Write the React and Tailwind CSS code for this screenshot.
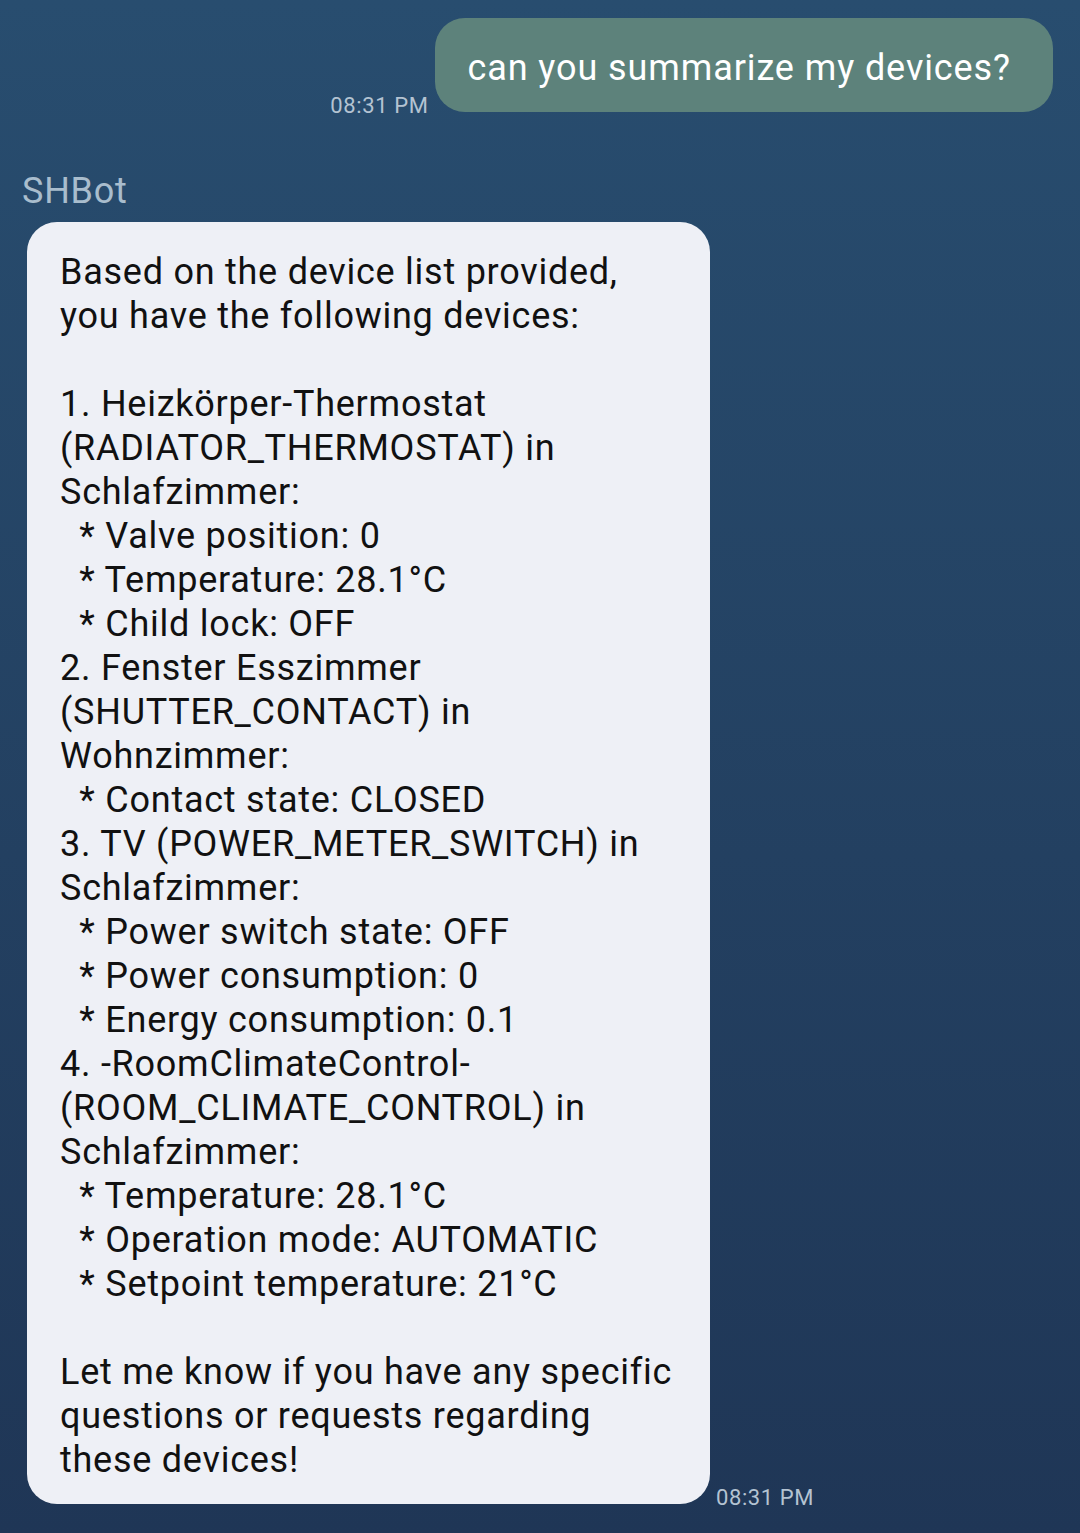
import React from "react";

const botText = `Based on the device list provided,
you have the following devices:

1. Heizkörper-Thermostat
(RADIATOR_THERMOSTAT) in
Schlafzimmer:
  * Valve position: 0
  * Temperature: 28.1°C
  * Child lock: OFF
2. Fenster Esszimmer
(SHUTTER_CONTACT) in
Wohnzimmer:
  * Contact state: CLOSED
3. TV (POWER_METER_SWITCH) in
Schlafzimmer:
  * Power switch state: OFF
  * Power consumption: 0
  * Energy consumption: 0.1
4. -RoomClimateControl-
(ROOM_CLIMATE_CONTROL) in
Schlafzimmer:
  * Temperature: 28.1°C
  * Operation mode: AUTOMATIC
  * Setpoint temperature: 21°C

Let me know if you have any specific
questions or requests regarding
these devices!`;

function Time() {
  return (
    <span className="text-[22px] leading-none tracking-[0.6px] text-[#b4c3d2] -mb-[5px] shrink-0">
      08:31 PM
    </span>
  );
}

export default function App() {
  return (
    <div
      className="w-[1080px] h-[1533px] overflow-hidden bg-gradient-to-b from-[#284d6f] to-[#1f3656] tracking-[0.75px]"
      style={{ fontFamily: "Roboto, 'Noto Sans', sans-serif" }}
    >
      <div className="flex items-end justify-end gap-[7px] pt-[18px] pr-[27px]">
        <Time />
        <div className="bg-[#5d827b] text-white text-[36px] leading-[44px] tracking-[0.9px] rounded-[30px] pt-[28px] pb-[22px] pl-8 pr-[42px]">
          can you summarize my devices?
        </div>
      </div>

      <div className="mt-[57px] pl-[22px] text-[36px] leading-[44px] text-[#a9bdcd]">
        SHBot
      </div>

      <div className="flex items-end gap-[6px] mt-[9px] pl-[27px]">
        <div className="w-[683px] bg-[#eef0f6] text-[#111] text-[36px] leading-[44px] rounded-[30px] pt-[28px] pb-[22px] pl-[33px] whitespace-pre">
          {botText}
        </div>
        <Time />
      </div>
    </div>
  );
}
